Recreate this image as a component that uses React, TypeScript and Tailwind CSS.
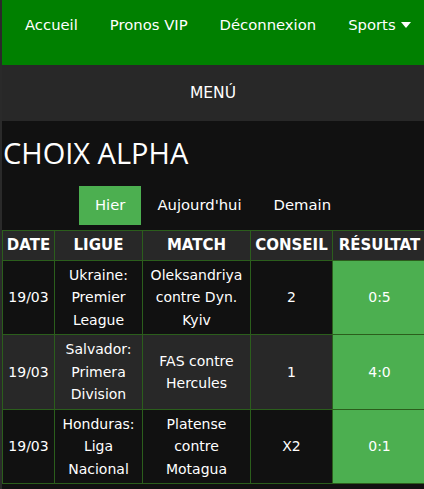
import React from "react";

const rows = [
  { date: "19/03", ligue: ["Ukraine:", "Premier", "League"], match: ["Oleksandriya", "contre Dyn.", "Kyiv"], conseil: "2", res: "0:5", alt: false },
  { date: "19/03", ligue: ["Salvador:", "Primera", "Division"], match: ["FAS contre", "Hercules"], conseil: "1", res: "4:0", alt: true },
  { date: "19/03", ligue: ["Honduras:", "Liga", "Nacional"], match: ["Platense", "contre", "Motagua"], conseil: "X2", res: "0:1", alt: false },
];

export default function App() {
  return (
    <div className="w-[424px] h-[489px] overflow-hidden bg-[#111111] border-l-2 border-[#2a2a2a] text-white" style={{ fontFamily: '"DejaVu Sans", Verdana, sans-serif' }}>
      <nav className="h-[65px] bg-[#008000] flex items-start pl-[7px] pt-[14px] text-[14.8px] whitespace-nowrap">
        <span className="px-4 leading-[22px]">Accueil</span>
        <span className="px-4 leading-[22px]">Pronos VIP</span>
        <span className="px-4 leading-[22px]">Déconnexion</span>
        <span className="px-4 leading-[22px] flex items-center gap-[5px]">
          Sports
          <svg width="10" height="6" viewBox="0 0 10 6"><path d="M0 0 L10 0 L5 6 Z" fill="white" /></svg>
        </span>
      </nav>
      <div className="h-[56px] bg-[#282828] flex items-center justify-center pt-[2px] text-[15.5px]">MENÚ</div>
      <h1 className="pl-[1px] pt-[12px] text-[29px] leading-[40px] text-white" style={{ fontFamily: '"Open Sans", sans-serif' }}>CHOIX ALPHA</h1>
      <div className="flex justify-center mt-[13px] text-[14.8px]">
        <span className="px-4 h-[39px] flex items-center bg-[#4caf50]">Hier</span>
        <span className="px-4 h-[39px] flex items-center">Aujourd'hui</span>
        <span className="px-4 h-[39px] flex items-center">Demain</span>
      </div>
      <table className="mt-[5px] border-collapse table-fixed w-[424px] text-center text-[14px] leading-[22.5px]">
        <colgroup>
          <col className="w-[52px]" />
          <col className="w-[88px]" />
          <col className="w-[108px]" />
          <col className="w-[82px]" />
          <col className="w-[94px]" />
        </colgroup>
        <thead>
          <tr className="bg-[#282828] h-[30px]">
            {["DATE", "LIGUE", "MATCH", "CONSEIL", "RÉSULTAT"].map((h) => (
              <th key={h} className="border border-[#2b5e1c] font-bold text-[15px] px-0 whitespace-nowrap">{h}</th>
            ))}
          </tr>
        </thead>
        <tbody>
          {rows.map((r, i) => (
            <tr key={i} className={r.alt ? "bg-[#282828] h-[75px]" : "bg-[#111111] h-[74px]"}>
              <td className="border border-[#2b5e1c] px-0">{r.date}</td>
              <td className="border border-[#2b5e1c] px-0">{r.ligue.map((l, j) => <div key={j}>{l}</div>)}</td>
              <td className="border border-[#2b5e1c] px-0">{r.match.map((l, j) => <div key={j}>{l}</div>)}</td>
              <td className="border border-[#2b5e1c] px-0">{r.conseil}</td>
              <td className="border border-[#2b5e1c] px-0 bg-[#4caf50]">{r.res}</td>
            </tr>
          ))}
        </tbody>
      </table>
    </div>
  );
}
